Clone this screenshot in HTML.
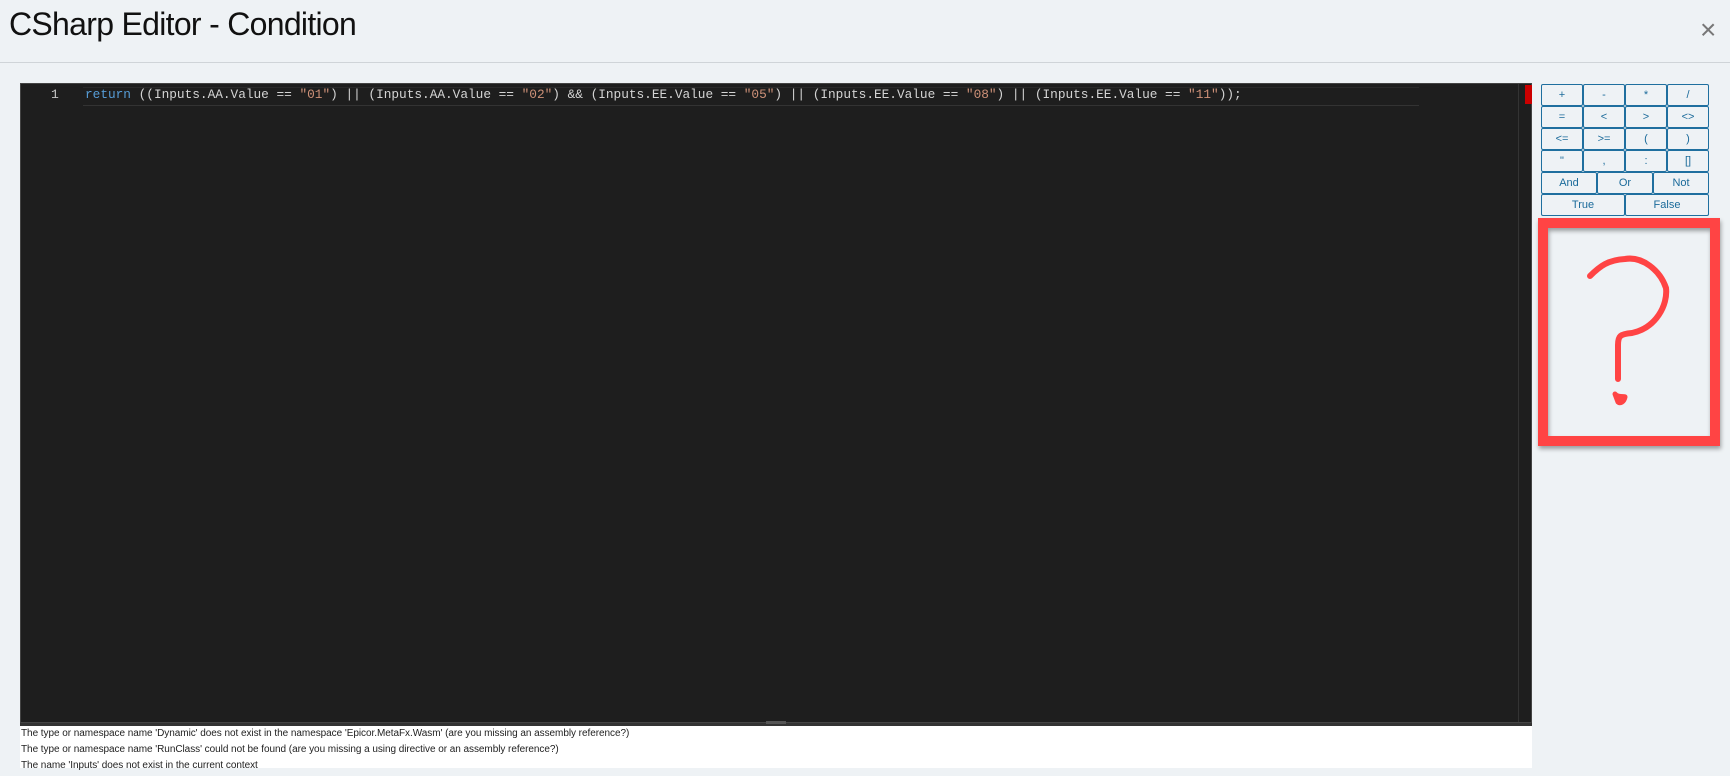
<!DOCTYPE html>
<html><head><meta charset="utf-8"><style>
*{margin:0;padding:0;box-sizing:border-box}
body{width:1730px;height:776px;background:#eef2f5;position:relative;overflow:hidden;font-family:"Liberation Sans",sans-serif}
.title{position:absolute;left:9px;top:6px;font-size:32px;color:#111;letter-spacing:-0.7px}
.close{position:absolute;left:1700px;top:14px;font-size:28px;color:#777;font-weight:300}
.hl{position:absolute;left:0;top:62px;width:1730px;height:1px;background:#cfd4d8}
.ed{position:absolute;left:20px;top:83px;width:1512px;height:640px;background:#1e1e1e;border:1px solid #444}
.cur{position:absolute;left:62px;top:3px;width:1336px;height:19px;border-top:1px solid #2a2a2a;border-bottom:1px solid #333}
.ln{position:absolute;left:30px;top:3px;font:13px "Liberation Mono",monospace;color:#c6c6c6}
.code{position:absolute;left:64px;top:3px;font:12.8px "Liberation Mono",monospace;color:#d4d4d4;white-space:pre;letter-spacing:-0.02px}
.kw{color:#569cd6}.st{color:#ce9178}
.sb{position:absolute;left:1497px;top:0;width:1px;height:638px;background:#333}
.red{position:absolute;left:1504px;top:1px;width:7px;height:19px;background:#c00}
.err{position:absolute;left:20px;top:723px;width:1512px;height:45px;background:#fff;border-top:3px solid #333;font-size:10px;color:#222;line-height:16px;padding-left:1px;letter-spacing:-0.05px}
.handle{position:absolute;left:766px;top:721px;width:20px;height:3px;background:#555}
.btns{position:absolute;left:1541px;top:84px;width:168px}
.row{display:flex;height:22px}
.b{flex:1;border:1px solid #1f6f9f;border-radius:2px;color:#1a6a9a;font-size:11px;display:flex;align-items:center;justify-content:center;background:#eef2f5}
</style></head><body>
<div class="title">CSharp Editor - Condition</div>
<div class="close">×</div>
<div class="hl"></div>
<div class="ed">
<div class="cur"></div>
<div class="ln">1</div>
<div class="code"><span class="kw">return</span> ((Inputs.AA.Value == <span class="st">"01"</span>) || (Inputs.AA.Value == <span class="st">"02"</span>) &amp;&amp; (Inputs.EE.Value == <span class="st">"05"</span>) || (Inputs.EE.Value == <span class="st">"08"</span>) || (Inputs.EE.Value == <span class="st">"11"</span>));</div>
<div class="sb"></div>
<div class="red"></div>
</div>
<div class="err">The type or namespace name 'Dynamic' does not exist in the namespace 'Epicor.MetaFx.Wasm' (are you missing an assembly reference?)<br>The type or namespace name 'RunClass' could not be found (are you missing a using directive or an assembly reference?)<br>The name 'Inputs' does not exist in the current context</div>
<div class="handle"></div>
<div class="btns">
<div class="row"><div class="b">+</div><div class="b">-</div><div class="b">*</div><div class="b">/</div></div>
<div class="row"><div class="b">=</div><div class="b">&lt;</div><div class="b">&gt;</div><div class="b">&lt;&gt;</div></div>
<div class="row"><div class="b">&lt;=</div><div class="b">&gt;=</div><div class="b">(</div><div class="b">)</div></div>
<div class="row"><div class="b">"</div><div class="b">,</div><div class="b">:</div><div class="b">[]</div></div>
<div class="row"><div class="b">And</div><div class="b">Or</div><div class="b">Not</div></div>
<div class="row"><div class="b">True</div><div class="b">False</div></div>
</div>
<svg style="position:absolute;left:0;top:0" width="1730" height="776">
<rect x="1543" y="223" width="172" height="218" fill="none" stroke="#ff4444" stroke-width="10" style="filter:drop-shadow(1px 3px 2px rgba(0,0,0,.35))"/>
<path d="M1590 276 C1600 266 1608 260 1625 259 C1642 256 1660 270 1666 288 C1668 305 1656 328 1632 333 C1620 334 1618 336 1618 345 L1618 379" fill="none" stroke="#ff4444" stroke-width="6" stroke-linecap="round"/>
<path d="M1615 394 C1618 398 1625 396 1625 397 C1624 402 1620 404 1618 402 Z" fill="#ff4444" stroke="#ff4444" stroke-width="5" stroke-linejoin="round"/>
</svg>
</body></html>
